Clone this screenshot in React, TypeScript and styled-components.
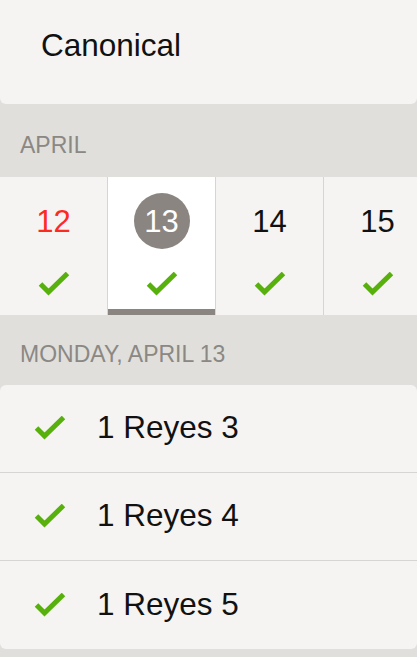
import styled, { createGlobalStyle } from "styled-components";

const GlobalStyle = createGlobalStyle`
  * { box-sizing: border-box; }
  html, body { margin: 0; padding: 0; }
  body {
    background: #e0dfdc;
    font-family: "Liberation Sans", Arial, Helvetica, sans-serif;
    -webkit-font-smoothing: antialiased;
  }
`;

const days = [
  { n: 12, holiday: true },
  { n: 13, selected: true },
  { n: 14 },
  { n: 15 },
];

const readings = ["1 Reyes 3", "1 Reyes 4", "1 Reyes 5"];

function Check() {
  return (
    <CheckIcon viewBox="0 0 32 24" aria-hidden>
      <path d="M2.5 12 L10.5 20 L29.5 1.5" />
    </CheckIcon>
  );
}

function App() {
  return (
    <Page>
      <GlobalStyle />
      <TitleCard>Canonical</TitleCard>
      <SectionHeader $top={30} $height={73}>April</SectionHeader>
      <DayStrip>
        {days.map((d) => (
          <DayColumn key={d.n} $selected={!!d.selected}>
            <DayBadge $selected={!!d.selected} $holiday={!!d.holiday}>
              {d.n}
            </DayBadge>
            <Check />
          </DayColumn>
        ))}
      </DayStrip>
      <SectionHeader $top={28} $height={70}>Monday, April 13</SectionHeader>
      <List>
        {readings.map((r) => (
          <Row key={r}>
            <Check />
            <RowText>{r}</RowText>
          </Row>
        ))}
      </List>
    </Page>
  );
}

const Page = styled.div`
  width: 417px;
  min-height: 657px;
  background: #e0dfdc;
  overflow: hidden;
`;

const TitleCard = styled.div`
  height: 104px;
  padding: 30px 0 0 41px;
  background: #f5f4f2;
  border-radius: 0 0 6px 6px;
  font-size: 31.5px;
  line-height: 1;
  color: #111;
`;

const SectionHeader = styled.div<{ $top: number; $height: number }>`
  height: ${(p) => p.$height}px;
  padding: ${(p) => p.$top}px 20px 0;
  font-size: 23px;
  line-height: 1;
  color: #8b8884;
  text-transform: uppercase;
`;

const DayStrip = styled.div`
  display: flex;
  height: 138px;
  background: #f5f4f2;
  overflow: hidden;
`;

const DayColumn = styled.div<{ $selected: boolean }>`
  flex: 0 0 108px;
  display: flex;
  flex-direction: column;
  align-items: center;
  padding-top: 16px;
  gap: 23px;
  border-right: 1px solid #d6d5d2;
  background: ${(p) => (p.$selected ? "#ffffff" : "#f5f4f2")};
  box-shadow: ${(p) => (p.$selected ? "inset 0 -6px 0 #8a8580" : "none")};
`;

const DayBadge = styled.div<{ $selected: boolean; $holiday: boolean }>`
  width: 56px;
  height: 56px;
  border-radius: 50%;
  display: flex;
  align-items: center;
  justify-content: center;
  font-size: 31px;
  line-height: 1;
  padding-top: 1px;
  background: ${(p) => (p.$selected ? "#8a8580" : "transparent")};
  color: ${(p) => (p.$selected ? "#ffffff" : p.$holiday ? "#fc2b1f" : "#111")};
`;

const CheckIcon = styled.svg`
  width: 32px;
  height: 24px;
  flex: 0 0 auto;
  fill: none;
  stroke: #58b00c;
  stroke-width: 5;
  stroke-linejoin: miter;
`;

const List = styled.div`
  background: #f5f4f2;
  border-radius: 6px;
  overflow: hidden;
`;

const Row = styled.div`
  display: flex;
  align-items: center;
  gap: 31px;
  height: 88px;
  padding: 0 0 1px 34px;
  border-bottom: 1px solid #d6d5d2;

  &:last-child {
    border-bottom: none;
  }
`;

const RowText = styled.span`
  font-size: 31.5px;
  line-height: 1;
  color: #111;
`;

export default App;
